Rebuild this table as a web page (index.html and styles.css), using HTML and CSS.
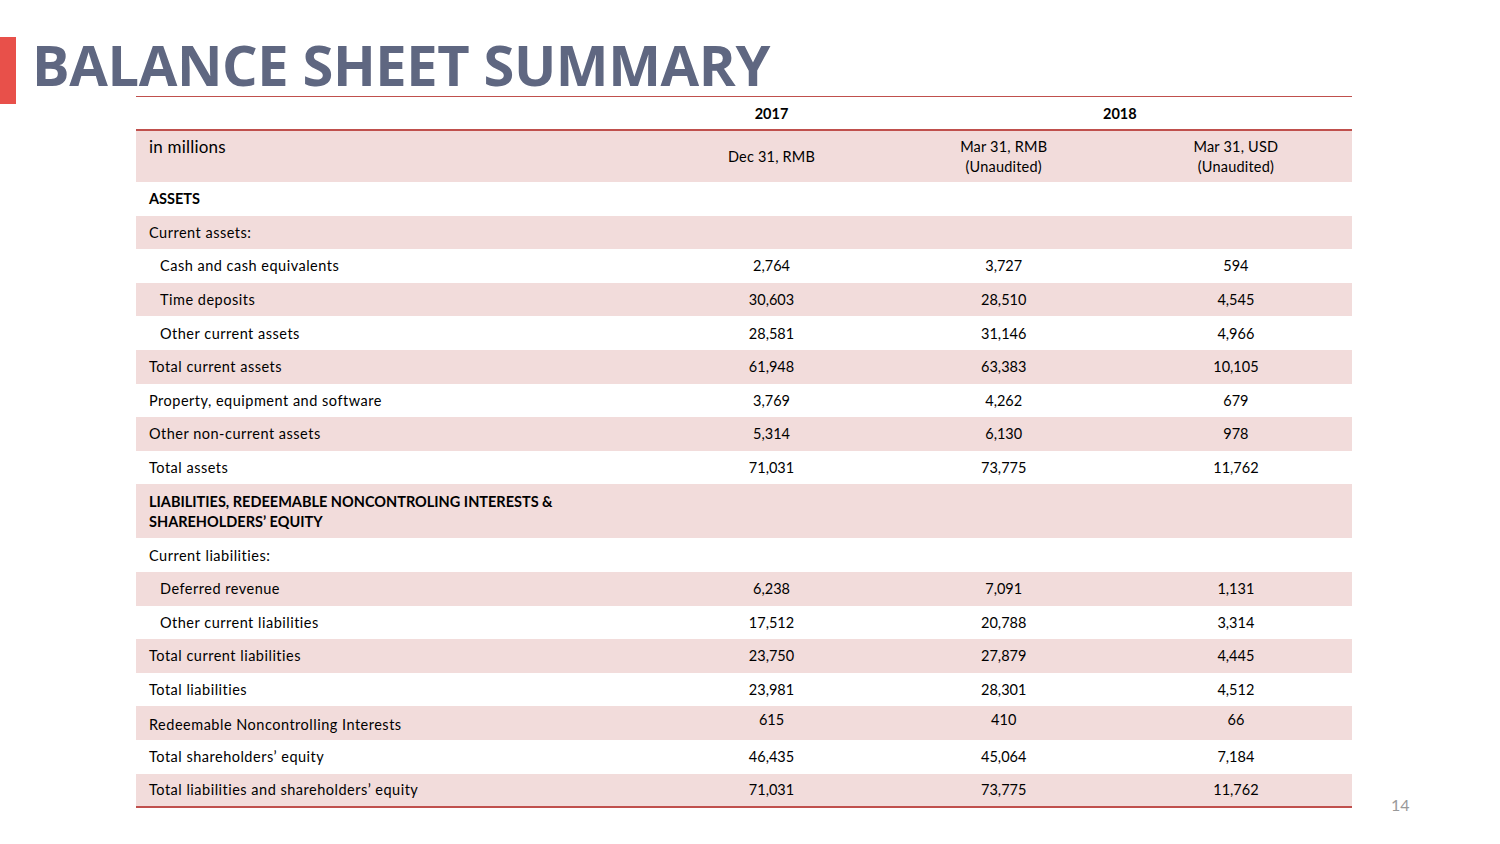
FILE: index.html
```html
<!DOCTYPE html>
<html>
<head>
<meta charset="utf-8">
<link rel="stylesheet" href="styles.css">
</head>
<body>
<div class="slide">
  <header class="title-row">
    <div class="accent"></div>
    <h1 class="title">BALANCE SHEET SUMMARY</h1>
  </header>
  <table class="bs">
    <colgroup>
      <col class="c-label"><col class="c-num"><col class="c-num"><col class="c-num">
    </colgroup>
    <thead>
      <tr class="years">
        <th></th><th>2017</th><th colspan="2">2018</th>
      </tr>
      <tr class="sub pink">
        <th class="units">in millions</th>
        <th>Dec 31, RMB</th>
        <th>Mar 31, RMB<br>(Unaudited)</th>
        <th>Mar 31, USD<br>(Unaudited)</th>
      </tr>
    </thead>
    <tbody>
      <tr><td class="lbl bold">ASSETS</td><td></td><td></td><td></td></tr>
      <tr class="pink"><td class="lbl">Current assets:</td><td></td><td></td><td></td></tr>
      <tr><td class="lbl ind">Cash and cash equivalents</td><td>2,764</td><td>3,727</td><td>594</td></tr>
      <tr class="pink"><td class="lbl ind">Time deposits</td><td>30,603</td><td>28,510</td><td>4,545</td></tr>
      <tr><td class="lbl ind">Other current assets</td><td>28,581</td><td>31,146</td><td>4,966</td></tr>
      <tr class="pink"><td class="lbl">Total current assets</td><td>61,948</td><td>63,383</td><td>10,105</td></tr>
      <tr><td class="lbl">Property, equipment and software</td><td>3,769</td><td>4,262</td><td>679</td></tr>
      <tr class="pink"><td class="lbl">Other non-current assets</td><td>5,314</td><td>6,130</td><td>978</td></tr>
      <tr><td class="lbl">Total assets</td><td>71,031</td><td>73,775</td><td>11,762</td></tr>
      <tr class="pink tall"><td class="lbl bold">LIABILITIES, REDEEMABLE NONCONTROLING INTERESTS &amp;<br>SHAREHOLDERS’ EQUITY</td><td></td><td></td><td></td></tr>
      <tr><td class="lbl">Current liabilities:</td><td></td><td></td><td></td></tr>
      <tr class="pink"><td class="lbl ind">Deferred revenue</td><td>6,238</td><td>7,091</td><td>1,131</td></tr>
      <tr><td class="lbl ind">Other current liabilities</td><td>17,512</td><td>20,788</td><td>3,314</td></tr>
      <tr class="pink"><td class="lbl">Total current liabilities</td><td>23,750</td><td>27,879</td><td>4,445</td></tr>
      <tr><td class="lbl">Total liabilities</td><td>23,981</td><td>28,301</td><td>4,512</td></tr>
      <tr class="pink raised"><td class="lbl">Redeemable Noncontrolling Interests</td><td>615</td><td>410</td><td>66</td></tr>
      <tr><td class="lbl">Total shareholders’ equity</td><td>46,435</td><td>45,064</td><td>7,184</td></tr>
      <tr class="pink last"><td class="lbl">Total liabilities and shareholders’ equity</td><td>71,031</td><td>73,775</td><td>11,762</td></tr>
    </tbody>
  </table>
  <div class="page-num">14</div>
</div>
</body>
</html>
```

FILE: styles.css
```css
html, body {
  margin: 0;
  padding: 0;
  background: #ffffff;
}

.slide {
  position: relative;
  width: 1500px;
  height: 844px;
  overflow: hidden;
  font-family: "Lato", "Open Sans", sans-serif;
  color: #000;
}

.title-row {
  display: flex;
  align-items: flex-start;
  padding-top: 37px;
  height: 59px;
}

.accent {
  width: 16px;
  height: 67px;
  background: #e8504a;
  flex: none;
}

.title {
  margin: -1px 0 0 16px;
  font-family: "Open Sans", sans-serif;
  font-weight: 700;
  font-size: 56px;
  line-height: 56px;
  letter-spacing: -0.4px;
  color: #5f6781;
  white-space: nowrap;
}

.bs {
  margin-left: 136px;
  width: 1216px;
  border-collapse: collapse;
  table-layout: fixed;
  font-size: 14.5px;
}

.c-label { width: 519px; }
.c-num { width: 232px; }

.bs thead tr.years {
  border-top: 1px solid #c0504d;
  border-bottom: 2px solid #c0504d;
}

.bs thead tr.years th {
  height: 32px;
  padding: 0;
  font-weight: 700;
  text-align: center;
  vertical-align: middle;
}

.bs thead tr.sub th {
  height: 51px;
  padding: 0;
  font-weight: 400;
  text-align: center;
  vertical-align: middle;
  line-height: 20px;
  letter-spacing: 0.2px;
}

.bs thead tr.sub th.units {
  text-align: left;
  vertical-align: top;
  padding: 6px 0 0 13px;
  font-size: 17px;
  height: 45px;
}

.pink { background: #f2dcdb; }

.bs tbody td {
  height: 32.6px;
  padding: 1px 0 0 0;
  text-align: center;
  vertical-align: middle;
  line-height: 20px;
}

.bs tbody td.lbl {
  text-align: left;
  padding-left: 13px;
  letter-spacing: 0.5px;
}

.bs tbody td.ind { padding-left: 24px; }
.bs tbody td.bold { font-weight: 700; letter-spacing: 0; }

.bs tbody tr.tall td { height: 53px; }

.bs tbody tr.raised td:not(.lbl) {
  height: 27.6px;
  padding-top: 0;
  padding-bottom: 6px;
}
.bs tbody tr.raised td.lbl { padding-top: 4px; height: 29.6px; }

.bs tbody tr.last { border-bottom: 2px solid #c0504d; }
.bs tbody tr.last td { height: 31px; }

.page-num {
  position: absolute;
  left: 1391px;
  top: 795px;
  font-size: 16px;
  color: #999999;
}
```
